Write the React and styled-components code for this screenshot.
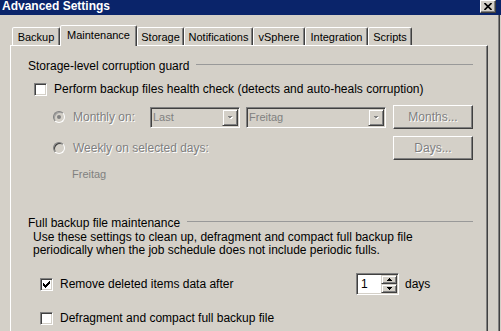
import React from "react";
import styled, { createGlobalStyle } from "styled-components";

const GlobalStyle = createGlobalStyle`
  html, body {
    margin: 0;
    padding: 0;
    background: #d4d0c8;
  }
  body {
    font-family: "Liberation Sans", Arial, sans-serif;
    font-size: 11px;
    color: #000;
  }
`;

const Window = styled.div`
  width: 501px;
  height: 331px;
  overflow: hidden;
  display: flex;
  flex-direction: column;
  background: #d4d0c8;
`;

const TitleBar = styled.div`
  height: 15px;
  flex-shrink: 0;
  background: #0a246a;
  display: flex;
  align-items: flex-start;
  justify-content: space-between;
  padding: 0 5px 0 2px;
`;

const Title = styled.div`
  color: #fff;
  font-weight: bold;
  font-size: 12px;
  line-height: 13px;
`;

const CloseButton = styled.div`
  width: 16px;
  height: 13px;
  box-sizing: border-box;
  background: #d4d0c8;
  border: 1px solid;
  border-color: #fff #404040 #404040 #fff;
  box-shadow: inset -1px -1px #808080;
  display: flex;
  align-items: center;
  justify-content: center;
`;

const Body = styled.div`
  flex: 1;
  display: flex;
  flex-direction: column;
  margin-right: 1px;
  border-right: 1px solid #404040;
  box-shadow: inset -1px 0 #808080;
  padding: 10px 11px 0 10px;
`;

const TabStrip = styled.div`
  display: flex;
  align-items: flex-end;
  height: 20px;
  padding-left: 2px;
  position: relative;
  z-index: 1;
`;

const Tab = styled.div`
  width: ${(p) => p.$w}px;
  height: ${(p) => (p.$active ? 21 : 18)}px;
  margin-bottom: ${(p) => (p.$active ? -1 : 0)}px;
  box-sizing: border-box;
  border: 1px solid;
  border-bottom: none;
  border-color: #fff #404040 transparent #fff;
  border-radius: 2px 2px 0 0;
  box-shadow: inset -1px 0 #808080;
  background: #d4d0c8;
  font-size: 11px;
  display: flex;
  align-items: center;
  justify-content: center;
  padding-bottom: ${(p) => (p.$active ? 3 : 0)}px;
  white-space: nowrap;
  position: relative;
  z-index: ${(p) => (p.$active ? 2 : 1)};
`;

const Panel = styled.div`
  flex: 1;
  position: relative;
  z-index: 0;
  border-top: 1px solid #fff;
  border-left: 1px solid #fff;
  border-right: 1px solid #404040;
  box-shadow: inset -1px 0 #808080;
  padding: 14px 14px 0 17px;
  font-size: 12px;
  display: flex;
  flex-direction: column;
`;

const GroupHeader = styled.div`
  display: flex;
  gap: 7px;
  line-height: 13px;
  margin-top: ${(p) => p.$mt || 0}px;
  white-space: nowrap;
  &::after {
    content: "";
    flex: 1;
    height: 1px;
    margin-top: 4px;
    background: #999;
  }
`;

const CheckRow = styled.div`
  display: flex;
  align-items: center;
  gap: 7px;
  min-height: 13px;
  padding-left: ${(p) => p.$indent}px;
  margin-top: ${(p) => p.$mt}px;
`;

const CheckBox = styled.span`
  width: 13px;
  height: 13px;
  flex-shrink: 0;
  box-sizing: border-box;
  border: 1px solid;
  border-color: #808080 #fff #fff #808080;
  box-shadow: inset 1px 1px #404040, inset -1px -1px #d4d0c8;
  background: #fff;
  display: flex;
  align-items: center;
  justify-content: center;
`;

const Label = styled.span`
  line-height: 13px;
  padding-top: 1px;
  white-space: nowrap;
  width: ${(p) => (p.$w ? `${p.$w}px` : "auto")};
`;

const Dim = styled.span`
  color: #808080;
  text-shadow: 1px 1px 0 #fff;
  line-height: 13px;
  white-space: nowrap;
  width: ${(p) => (p.$w ? `${p.$w}px` : "auto")};
  margin-left: ${(p) => p.$ml || 0}px;
`;

const OptionRow = styled.div`
  display: flex;
  align-items: center;
  height: 24px;
  padding-left: 25px;
  margin-top: ${(p) => p.$mt}px;
`;

const Radio = styled.span`
  width: 12px;
  height: 12px;
  flex-shrink: 0;
  box-sizing: border-box;
  border-radius: 50%;
  border: 1px solid;
  border-color: #808080 #fff #fff #808080;
  box-shadow: inset 1px 1px ${(p) => (p.$checked ? "#a0a0a0" : "#404040")},
    inset -1px -1px #d4d0c8;
  background: #d4d0c8;
  display: flex;
  align-items: center;
  justify-content: center;
  &::after {
    content: "";
    display: ${(p) => (p.$checked ? "block" : "none")};
    width: 4px;
    height: 4px;
    border-radius: 50%;
    background: #808080;
  }
`;

const Select = styled.div`
  width: ${(p) => p.$w}px;
  height: 21px;
  flex-shrink: 0;
  box-sizing: border-box;
  margin-left: ${(p) => p.$ml || 0}px;
  border: 1px solid;
  border-color: #808080 #fff #fff #808080;
  box-shadow: inset 1px 1px #404040, inset -1px -1px #d4d0c8;
  padding: 1px;
  display: flex;
  align-items: stretch;
  color: #808080;
  font-size: 11px;
`;

const SelectValue = styled.span`
  flex: 1;
  padding-left: 1px;
  line-height: 17px;
`;

const ArrowButton = styled.span`
  width: 16px;
  box-sizing: border-box;
  border: 1px solid;
  border-color: #d4d0c8 #404040 #404040 #d4d0c8;
  box-shadow: inset 1px 1px #fff, inset -1px -1px #808080;
  display: flex;
  align-items: center;
  justify-content: center;
`;

const Button = styled.div`
  width: 80px;
  height: 24px;
  flex-shrink: 0;
  box-sizing: border-box;
  margin-left: auto;
  border: 1px solid;
  border-color: #fff #404040 #404040 #fff;
  box-shadow: inset -1px -1px #808080;
  display: flex;
  align-items: center;
  justify-content: center;
`;

const Note = styled.div`
  color: #808080;
  font-size: 11px;
  line-height: 13px;
  padding-left: 44px;
  margin-top: ${(p) => p.$mt}px;
`;

const Description = styled.div`
  line-height: 13px;
  padding-left: 5px;
  margin-top: ${(p) => p.$mt}px;
`;

const SpinGroup = styled.div`
  display: flex;
  align-items: center;
  gap: 6px;
`;

const Spinner = styled.div`
  width: 43px;
  height: 22px;
  box-sizing: border-box;
  border: 1px solid;
  border-color: #808080 #fff #fff #808080;
  box-shadow: inset 1px 1px #404040, inset -1px -1px #d4d0c8;
  background: #fff;
  padding: 1px 1px 1px 4px;
  display: flex;
  align-items: stretch;
`;

const SpinValue = styled.span`
  flex: 1;
  line-height: 18px;
`;

const SpinButtons = styled.span`
  width: 16px;
  display: flex;
  flex-direction: column;
`;

const SpinButton = styled.span`
  flex: 1;
  box-sizing: border-box;
  background: #d4d0c8;
  border: 1px solid;
  border-color: #d4d0c8 #404040 #404040 #d4d0c8;
  box-shadow: inset 1px 1px #fff, inset -1px -1px #808080;
  display: flex;
  align-items: center;
  justify-content: center;
`;

const tabs = [
  { name: "Backup", w: 48 },
  { name: "Maintenance", w: 77, active: true },
  { name: "Storage", w: 47 },
  { name: "Notifications", w: 69 },
  { name: "vSphere", w: 52 },
  { name: "Integration", w: 63 },
  { name: "Scripts", w: 44 },
];

const CheckMark = () => (
  <svg width="7" height="7" viewBox="0 0 7 7" shapeRendering="crispEdges">
    <path d="M0 2 L2 4 L6 0 L7 0 L7 3 L2 7 L0 5 Z" fill="#000" />
  </svg>
);

const DropArrow = ({ color = "#808080" }) => (
  <svg width="7" height="5" viewBox="0 0 7 5" shapeRendering="crispEdges">
    <path d="M1.5 1.5 L6.5 1.5 L4 4.5 Z" fill="#fff" />
    <path d="M0.5 0.5 L5.5 0.5 L3 3.5 Z" fill={color} />
  </svg>
);

const SpinArrow = ({ up }) => (
  <svg width="5" height="3" viewBox="0 0 5 3" shapeRendering="crispEdges">
    <path d={up ? "M2.5 0 L5 3 L0 3 Z" : "M0 0 L5 0 L2.5 3 Z"} fill="#000" />
  </svg>
);

const App = () => {
  return (
    <>
      <GlobalStyle />
      <Window>
        <TitleBar>
          <Title>Advanced Settings</Title>
          <CloseButton>
            <svg width="8" height="7" viewBox="0 0 8 7">
              <path d="M0.5 0 L7.5 7 M7.5 0 L0.5 7" stroke="#000" strokeWidth="1.6" />
            </svg>
          </CloseButton>
        </TitleBar>
        <Body>
          <TabStrip>
            {tabs.map((t) => (
              <Tab key={t.name} $w={t.w} $active={t.active}>
                {t.name}
              </Tab>
            ))}
          </TabStrip>
          <Panel>
            <GroupHeader>Storage-level corruption guard</GroupHeader>
            <CheckRow $indent={6} $mt={9}>
              <CheckBox />
              <Label>Perform backup files health check (detects and auto-heals corruption)</Label>
            </CheckRow>

            <OptionRow $mt={9}>
              <Radio $checked />
              <Dim $ml={8} $w={77}>Monthly on:</Dim>
              <Select $w={90}>
                <SelectValue>Last</SelectValue>
                <ArrowButton>
                  <DropArrow />
                </ArrowButton>
              </Select>
              <Select $w={140} $ml={6}>
                <SelectValue>Freitag</SelectValue>
                <ArrowButton>
                  <DropArrow />
                </ArrowButton>
              </Select>
              <Button>
                <Dim>Months...</Dim>
              </Button>
            </OptionRow>

            <OptionRow $mt={7}>
              <Radio />
              <Dim $ml={8}>Weekly on selected days:</Dim>
              <Button>
                <Dim>Days...</Dim>
              </Button>
            </OptionRow>
            <Note $mt={8}>Freitag</Note>

            <GroupHeader $mt={36}>Full backup file maintenance</GroupHeader>
            <Description $mt={1}>
              Use these settings to clean up, defragment and compact full backup file
              <br />
              periodically when the job schedule does not include periodic fulls.
            </Description>

            <CheckRow $indent={12} $mt={16}>
              <CheckBox>
                <CheckMark />
              </CheckBox>
              <Label $w={289}>Remove deleted items data after</Label>
              <SpinGroup>
                <Spinner>
                  <SpinValue>1</SpinValue>
                  <SpinButtons>
                    <SpinButton>
                      <SpinArrow up />
                    </SpinButton>
                    <SpinButton>
                      <SpinArrow />
                    </SpinButton>
                  </SpinButtons>
                </Spinner>
                <Label>days</Label>
              </SpinGroup>
            </CheckRow>

            <CheckRow $indent={12} $mt={16}>
              <CheckBox />
              <Label>Defragment and compact full backup file</Label>
            </CheckRow>
          </Panel>
        </Body>
      </Window>
    </>
  );
};

export default App;
